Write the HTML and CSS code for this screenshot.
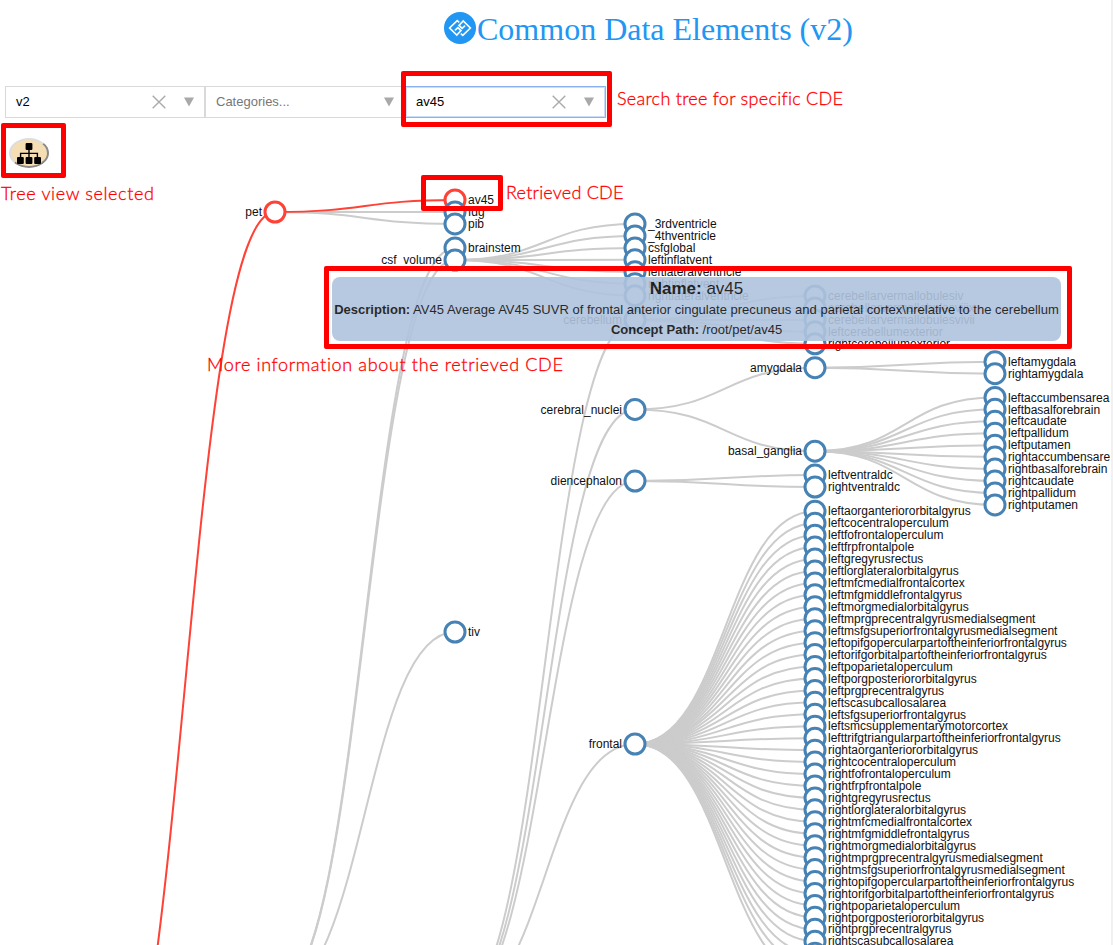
FILE: index.html
```
<!DOCTYPE html>
<html lang="en">
<head>
<meta charset="utf-8">
<title>Common Data Elements (v2)</title>
<link rel="stylesheet" href="styles.css">
</head>
<body>
<div class="page">
  <header class="title-bar">
    <svg class="logo" width="32" height="32" viewBox="0 0 32 32">
      <circle cx="16" cy="16" r="16" fill="#2196f3"/>
      <g fill="none" stroke="#fff" stroke-width="1.6">
        <path d="M15.2 10.4 L13.2 8.6 L5.6 16 L12.8 23 L17 18.6 L13.9 15.6 L10.9 18.4"/>
        <path d="M16.8 21.6 L18.8 23.4 L26.4 16 L19.2 9 L15 13.4 L18.1 16.4 L21.1 13.6"/>
      </g>
    </svg>
    <h1>Common Data Elements (v2)</h1>
  </header>

  <div class="filters">
    <div class="select"><span class="value">v2</span>
      <svg class="clear" width="14" height="14" viewBox="0 0 14 14"><path d="M.7 .7 L13.3 13.3 M13.3 .7 L.7 13.3"/></svg>
      <svg class="arrow" width="10" height="10" viewBox="0 0 10 10"><path d="M0 .5 H10 L5 9.5Z"/></svg>
    </div>
    <div class="select"><span class="value placeholder">Categories...</span>
      <svg class="arrow" width="10" height="10" viewBox="0 0 10 10"><path d="M0 .5 H10 L5 9.5Z"/></svg>
    </div>
    <div class="select focused"><span class="value">av45</span>
      <svg class="clear" width="14" height="14" viewBox="0 0 14 14"><path d="M.7 .7 L13.3 13.3 M13.3 .7 L.7 13.3"/></svg>
      <svg class="arrow" width="10" height="10" viewBox="0 0 10 10"><path d="M0 .5 H10 L5 9.5Z"/></svg>
    </div>
  </div>

  <button class="view-toggle" aria-label="Tree view">
    <svg width="24" height="21" viewBox="0 0 24 21">
      <g fill="#000">
        <rect x="8.6" y="0" width="6.8" height="7" rx="1"/>
        <rect x="0" y="14" width="6.8" height="7" rx="1"/>
        <rect x="8.6" y="14" width="6.8" height="7" rx="1"/>
        <rect x="17.2" y="14" width="6.8" height="7" rx="1"/>
      </g>
      <path d="M12 6 V15 M3.6 15 V10.4 H20.4 V15" fill="none" stroke="#000" stroke-width="1.4"/>
    </svg>
  </button>

  <svg class="tree" id="tree" width="1110" height="945" viewBox="0 0 1110 945"></svg>

  <div class="tooltip">
    <div class="tip-name"><b>Name:</b> av45</div>
    <div class="tip-desc"><b>Description:</b> AV45 Average AV45 SUVR of frontal anterior cingulate precuneus and parietal cortex\nrelative to the cerebellum</div>
    <div class="tip-path"><b>Concept Path:</b> /root/pet/av45</div>
  </div>

  <div class="frame frame-search"></div>
  <div class="frame frame-view"></div>
  <div class="frame frame-node"></div>
  <div class="frame frame-tip"></div>
  <div class="note note-search">Search tree for specific CDE</div>
  <div class="note note-view">Tree view selected</div>
  <div class="note note-node">Retrieved CDE</div>
  <div class="note note-tip">More information about the retrieved CDE</div>
</div>
<script src="tree.js"></script>
</body>
</html>
```
FILE: styles.css
```
* { box-sizing: border-box; }
body { margin: 0; background: #fff; font-family: "Liberation Sans", Arial, sans-serif; }
.page { position: relative; width: 1113px; height: 945px; overflow: hidden; border-right: 2px solid #f1f1f1; }

.title-bar { display: flex; align-items: flex-start; height: 86px; padding: 12px 0 0 444px; }
.logo { flex: none; }
h1 { margin: 0 0 0 1px; font: 400 32px/34px "Liberation Serif", "Times New Roman", serif; color: #2196f3; white-space: nowrap; }

.filters { display: flex; padding-left: 5px; height: 32px; }
.select { display: flex; align-items: center; width: 200px; height: 32px; padding: 0 10px; border: 1px solid #d9d9d9; background: #fff; }
.select.focused { width: 201px; padding-right: 11px; border-color: #8ab1f0; box-shadow: inset 0 0 0 1px #c9dcf9; }
.value { flex: 1; font-size: 13px; line-height: 30px; color: #000; }
.placeholder { color: #777; }
.clear { margin-right: 18px; fill: none; stroke: #aaa; stroke-width: 1.4; }
.arrow { fill: #a9a9a9; }

.view-toggle { display: flex; align-items: center; justify-content: center; width: 40px; height: 30px; margin: 20px 0 0 9px; padding: 0; border: 2px outset #ddd; border-radius: 50%; background: #f5deb3; }

.tree { position: absolute; left: 0; top: 0; }
.link { fill: none; stroke: #ccc; stroke-width: 2px; }
.link.hit { stroke: #ff4136; }
.node circle { fill: #fff; stroke: steelblue; stroke-width: 3px; }
.node.hit circle { stroke: #ff4136; }
.node text { font-size: 12px; fill: #111; }
.node.inner text { text-anchor: end; }

.tooltip { position: absolute; left: 332px; top: 277px; width: 729px; height: 64px; padding-top: 1px; border-radius: 8px; background: lightsteelblue; opacity: .9; text-align: center; color: #111; white-space: nowrap; }
.tip-name { font-size: 17px; line-height: 22px; }
.tip-desc { font-size: 13px; line-height: 20px; letter-spacing: .017px; }
.tip-path { font-size: 13px; line-height: 20px; }

.frame { position: absolute; border: 5px solid #f00; border-radius: 2px; }
.frame-search { left: 401px; top: 71px; width: 211px; height: 56px; }
.frame-view { left: 1px; top: 123px; width: 65px; height: 55px; }
.frame-node { left: 421px; top: 175px; width: 82px; height: 36px; }
.frame-tip { left: 324px; top: 266px; width: 748px; height: 83px; }
.note { position: absolute; font: 300 18px/22px Lato, "Open Sans", sans-serif; color: #f00; white-space: nowrap; letter-spacing: .62px; -webkit-text-stroke: .3px #f00; }
.note-search { left: 617px; top: 87px; letter-spacing: .28px; }
.note-view { left: 1px; top: 182px; }
.note-node { left: 506px; top: 181px; letter-spacing: .22px; }
.note-tip { left: 207px; top: 353px; letter-spacing: .65px; }
```
FILE: tree.js
```
const STEP = 11.944;
const svg = document.getElementById('tree');
const NS = 'http://www.w3.org/2000/svg';
const links = [], nodes = [];

function node(name, x, y, opts = {}) {
  const n = { name, x, y, ...opts };
  nodes.push(n);
  return n;
}
function link(a, b, hit) { links.push({ a, b, hit }); }
function leaves(parent, names, x, top) {
  names.forEach((name, i) => link(parent, node(name, x, top + i * STEP)));
}

const root = { x: 95, y: 1159 };
const brain = { x: 275, y: 993 };
const grey = { x: 455, y: 1007 };

const pet = node('pet', 275, 212, { inner: true, hit: true });
link(root, pet, true);
const av45 = node('av45', 455, 200, { hit: true });
leaves(pet, ['fdg', 'pib'], 455, 212);
link(pet, av45, true);

link(brain, node('brainstem', 455, 248));
const csf = node('csf_volume', 455, 260, { inner: true });
link(brain, csf);
link(brain, node('tiv', 455, 632));
leaves(csf, ['_3rdventricle', '_4thventricle', 'csfglobal', 'leftinflatvent', 'leftlateralventricle', 'rightinflatvent', 'rightlateralventricle'], 635, 224);

const cerebellum = node('cerebellum', 635, 320, { inner: true });
link(grey, cerebellum);
leaves(cerebellum, ['cerebellarvermallobulesiv', 'cerebellarvermallobulesviiix', 'cerebellarvermallobulesvivii', 'leftcerebellumexterior', 'rightcerebellumexterior'], 815, 296);

const nuclei = node('cerebral_nuclei', 635, 409.4, { inner: true });
link(grey, nuclei);
const amygdala = node('amygdala', 815, 367.7, { inner: true });
link(nuclei, amygdala);
leaves(amygdala, ['leftamygdala', 'rightamygdala'], 995, 361.7);
const basal = node('basal_ganglia', 815, 451.2, { inner: true });
link(nuclei, basal);
leaves(basal, ['leftaccumbensarea', 'leftbasalforebrain', 'leftcaudate', 'leftpallidum', 'leftputamen', 'rightaccumbensarea', 'rightbasalforebrain', 'rightcaudate', 'rightpallidum', 'rightputamen'], 995, 397.4);

const dien = node('diencephalon', 635, 481.1, { inner: true });
link(grey, dien);
leaves(dien, ['leftventraldc', 'rightventraldc'], 815, 475.1);

const frontal = node('frontal', 635, 744, { inner: true });
link(grey, frontal);
const gyri = ['aorganteriororbitalgyrus', 'cocentraloperculum', 'fofrontaloperculum', 'frpfrontalpole', 'gregyrusrectus', 'lorglateralorbitalgyrus', 'mfcmedialfrontalcortex', 'mfgmiddlefrontalgyrus', 'morgmedialorbitalgyrus', 'mprgprecentralgyrusmedialsegment', 'msfgsuperiorfrontalgyrusmedialsegment', 'opifgopercularpartoftheinferiorfrontalgyrus', 'orifgorbitalpartoftheinferiorfrontalgyrus', 'poparietaloperculum', 'porgposteriororbitalgyrus', 'prgprecentralgyrus', 'scasubcallosalarea', 'sfgsuperiorfrontalgyrus', 'smcsupplementarymotorcortex', 'trifgtriangularpartoftheinferiorfrontalgyrus'];
leaves(frontal, [...gyri.map(g => 'left' + g), ...gyri.map(g => 'right' + g)], 815, 511.25);

function el(tag, attrs, parent) {
  const e = document.createElementNS(NS, tag);
  for (const k in attrs) e.setAttribute(k, attrs[k]);
  parent.appendChild(e);
  return e;
}

for (const { a, b, hit } of links) {
  const m = (a.x + b.x) / 2;
  el('path', { class: hit ? 'link hit' : 'link', d: `M${a.x},${a.y}C${m},${a.y} ${m},${b.y} ${b.x},${b.y}` }, svg);
}
nodes.sort((p, q) => p.y - q.y);
for (const n of nodes) {
  const g = el('g', { class: 'node' + (n.inner ? ' inner' : '') + (n.hit ? ' hit' : ''), transform: `translate(${n.x},${n.y})` }, svg);
  el('circle', { r: 10 }, g);
  el('text', { x: n.inner ? -13 : 13, dy: '.35em' }, g).textContent = n.name;
}
```
